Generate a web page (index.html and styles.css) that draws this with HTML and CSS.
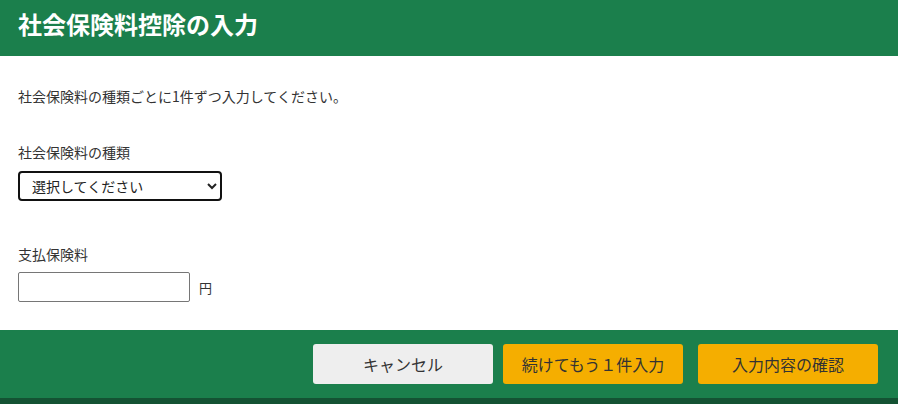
FILE: index.html
```html
<!DOCTYPE html>
<html lang="ja">
<head>
  <meta charset="UTF-8" />
  <meta name="viewport" content="width=device-width, initial-scale=1.0"/>
  <title>社会保険料控除の入力</title>
  <link rel="stylesheet" href="styles.css">
</head>
<body>
  <header class="page-header">
    <h1>社会保険料控除の入力</h1>
  </header>

  <main class="form-body">
    <p class="lead">社会保険料の種類ごとに1件ずつ入力してください。</p>

    <div class="field">
      <label class="field-label" for="kind">社会保険料の種類</label>
      <select id="kind" class="kind-select">
        <option value="">選択してください</option>
        <option value="kenko">健康保険</option>
        <option value="nenkin">国民年金</option>
        <option value="kaigo">介護保険</option>
      </select>
    </div>

    <div class="field field-amount">
      <label class="field-label" for="amount">支払保険料</label>
      <div class="amount-row">
        <input type="text" id="amount" class="amount-input" />
        <span class="unit">円</span>
      </div>
    </div>
  </main>

  <footer class="actions">
    <button class="btn btn-cancel">キャンセル</button>
    <button class="btn btn-primary">続けてもう１件入力</button>
    <button class="btn btn-primary btn-confirm">入力内容の確認</button>
  </footer>
</body>
</html>
```

FILE: styles.css
```css
body {
  margin: 0;
  font-family: Meiryo, "Noto Sans CJK JP", "Noto Sans", sans-serif;
  color: #333333;
  background: #ffffff;
}

.page-header {
  background: #1b7f4c;
  height: 56px;
  padding: 0 18px;
  display: flex;
  align-items: center;
}

.page-header h1 {
  margin: 0 0 8px;
  font-size: 24px;
  font-weight: bold;
  color: #ffffff;
  line-height: 1;
}

.form-body {
  padding: 30px 18px 28px;
}

.lead {
  margin: 0;
  font-size: 14px;
  line-height: 20px;
}

.field {
  margin-top: 36px;
}

.field-amount {
  margin-top: 43px;
}

/* label sits on its own line above the control */
.field-label {
  display: block;
  font-size: 14px;
  line-height: 20px;
}

.kind-select {
  display: block;
  margin-top: 9px;
  width: 204px;
  height: 30px;
  padding: 0 6px 0 8px;
  border: 2px solid #111111;
  border-radius: 4px;
  background: #ffffff;
  font-family: inherit;
  font-size: 14px;
  color: #222222;
}

.amount-row {
  margin-top: 8px;
  display: flex;
  align-items: center;
}

.amount-input {
  box-sizing: border-box;
  width: 172px;
  height: 30px;
  margin: 0;
  border: 1px solid #767676;
  border-radius: 2px;
  font-size: 14px;
}

.unit {
  margin-left: 9px;
  font-size: 13px;
}

.actions {
  background: #1b7f4c;
  border-bottom: 6px solid #145233;
  padding: 14px 20px 0 0;
  box-sizing: border-box;
  height: 74px;
  display: flex;
  justify-content: flex-end;
  align-items: flex-start;
  gap: 10px;
}

.btn {
  width: 180px;
  height: 40px;
  border: none;
  border-radius: 3px;
  font-family: inherit;
  font-size: 16px;
  color: #333333;
  cursor: pointer;
}

.btn-cancel {
  background: #eeeeee;
}

.btn-primary {
  background: #f5ae00;
}

.btn-confirm {
  margin-left: 5px;
}
```
